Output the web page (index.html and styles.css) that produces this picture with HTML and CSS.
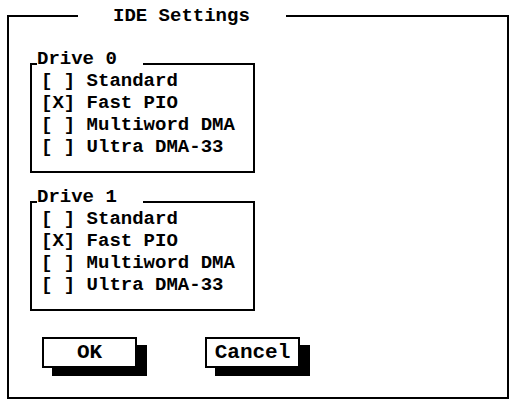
FILE: index.html
```html
<!DOCTYPE html>
<html lang="en">
<head>
  <meta charset="UTF-8" />
  <title>IDE Settings</title>
  <link rel="stylesheet" href="styles.css">
</head>
<body>

<div class="dialog">
  <div class="dialog-head">
    <span class="seg seg-start"></span>
    <span class="dialog-title">IDE Settings</span>
    <span class="seg seg-fill"></span>
  </div>

  <div class="group">
    <div class="group-head">
      <span class="seg group-start"></span>
      <span class="group-title">Drive 0</span>
      <span class="seg seg-fill"></span>
    </div>
    <div class="options">
      <div class="option">[ ] Standard</div>
      <div class="option">[X] Fast PIO</div>
      <div class="option">[ ] Multiword DMA</div>
      <div class="option">[ ] Ultra DMA-33</div>
    </div>
  </div>

  <div class="group group-next">
    <div class="group-head">
      <span class="seg group-start"></span>
      <span class="group-title">Drive 1</span>
      <span class="seg seg-fill"></span>
    </div>
    <div class="options">
      <div class="option">[ ] Standard</div>
      <div class="option">[X] Fast PIO</div>
      <div class="option">[ ] Multiword DMA</div>
      <div class="option">[ ] Ultra DMA-33</div>
    </div>
  </div>

  <div class="buttons">
    <button class="btn">OK</button>
    <button class="btn">Cancel</button>
  </div>
</div>

</body>
</html>
```

FILE: styles.css
```css
body {
  margin: 0;
  background: #fff;
  color: #000;
  font-family: "Liberation Mono", "Courier New", monospace;
  font-weight: bold;
  font-size: 19px;
}
.dialog {
  display: flex;
  flex-direction: column;
  box-sizing: border-box;
  width: 502px;
  height: 384px;
  margin: 15px 0 0 7px;
  border: 2px solid #000;
  border-top: none;
}
.dialog-head {
  display: flex;
  align-items: center;
  height: 18px;
  line-height: 18px;
  margin: -8px -2px 0;
}
.seg {
  height: 2px;
  background: #000;
}
.seg-start {
  width: 71px;
}
.seg-fill {
  flex: 1;
}
.dialog-title {
  padding: 0 36px 0 35px;
  white-space: pre;
}
.group {
  display: flex;
  flex-direction: column;
  box-sizing: border-box;
  width: 225px;
  margin: 38px 0 0 21px;
  border: 2px solid #000;
  border-top: none;
}
.group-next {
  margin-top: 28px;
}
.group-head {
  display: flex;
  align-items: flex-start;
  height: 22px;
  line-height: 22px;
  margin: -15px -2px 0;
}
.group-head .seg {
  margin-top: 15px;
}
.group-start {
  width: 7px;
}
.group-title {
  padding-right: 26px;
}
.options {
  padding: 0 0 13px 9px;
  line-height: 22px;
}
.option {
  white-space: pre;
}
.buttons {
  display: flex;
  gap: 68px;
  margin-top: 26px;
  padding-left: 33px;
}
.btn {
  width: 95px;
  height: 31px;
  padding: 0;
  border: 2px solid #000;
  border-radius: 0;
  background: #fff;
  color: #000;
  font: inherit;
  font-size: 21px;
  box-shadow: 10px 8px 0 #000;
  cursor: pointer;
}
```
